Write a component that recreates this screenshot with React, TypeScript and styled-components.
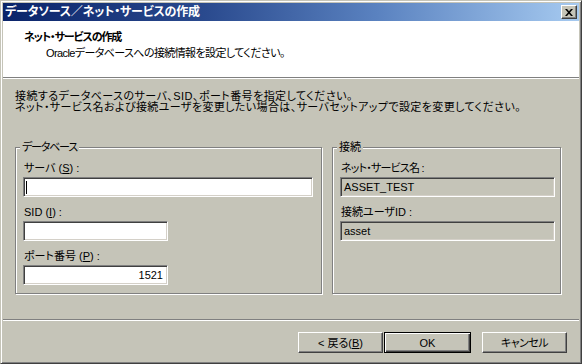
import React from "react";
import styled, { createGlobalStyle } from "styled-components";

const FACE = "#c5c4b8";

const GlobalStyle = createGlobalStyle`
  html, body {
    margin: 0;
    padding: 0;
    background: ${FACE};
  }
  body {
    font-family: "Liberation Sans", "Noto Sans CJK JP", sans-serif;
    font-size: 11px;
    font-feature-settings: "palt";
    color: #000;
  }
  * { box-sizing: border-box; }
`;

const Window = styled.div`
  width: 582px;
  height: 364px;
  display: flex;
  flex-direction: column;
  background: ${FACE};
  border: 1px solid;
  border-color: ${FACE} #404040 #404040 ${FACE};
  box-shadow: inset 1px 1px 0 #fff, inset -1px -1px 0 #808080;
  padding: 2px;
`;

const TitleBar = styled.div`
  height: 18px;
  flex: none;
  display: flex;
  align-items: center;
  justify-content: space-between;
  padding: 0 2px 0 2px;
  background: linear-gradient(to right, #0a246a 0%, #2a4a8e 35%, #5a82c0 65%, #a6caf0 100%);
`;

const TitleText = styled.span`
  color: #fff;
  font-weight: bold;
  font-size: 12px;
  line-height: 14px;
  letter-spacing: -0.2px;
`;

const CloseButton = styled.div`
  width: 16px;
  height: 14px;
  display: flex;
  align-items: center;
  justify-content: center;
  background: ${FACE};
  border: 1px solid;
  border-color: #fff #404040 #404040 #fff;
  box-shadow: inset -1px -1px 0 #808080;
`;

const Header = styled.div`
  height: 57px;
  flex: none;
  background: #fff;
  border-bottom: 1px solid #808080;
  padding: 9px 0 0 21px;
`;

const Heading = styled.div`
  font-weight: bold;
  line-height: 14px;
  letter-spacing: -1.1px;
`;

const SubTitle = styled.div`
  line-height: 14px;
  margin: 2px 0 0 22px;
  letter-spacing: -0.6px;
`;

const Body = styled.div`
  flex: 1;
  border-top: 1px solid #fff;
  border-bottom: 1px solid #808080;
  padding: 12px 0 0 12px;
  display: flex;
  flex-direction: column;
`;

const Instructions = styled.div`
  display: flex;
  flex-direction: column;
`;

const Line = styled.div<{ $ls: number }>`
  line-height: 11px;
  height: 11px;
  white-space: nowrap;
  letter-spacing: ${(p) => p.$ls}px;
`;

const Groups = styled.div`
  display: flex;
  gap: 10px;
  margin-top: 34px;
`;

const GroupBox = styled.div<{ $width: number }>`
  width: ${(p) => p.$width}px;
  height: 147px;
  border: 1px solid #808080;
  box-shadow: inset 1px 1px 0 #fff, 1px 1px 0 #fff;
  display: flex;
  flex-direction: column;
  align-items: flex-start;
  padding: 0 0 0 7px;
`;

const Legend = styled.span<{ $ls?: number }>`
  margin: -8px 0 0 -3px;
  padding: 0 2px;
  line-height: 14px;
  background: ${FACE};
  letter-spacing: ${(p) => p.$ls ?? 0}px;
`;

const Label = styled.div<{ $first?: boolean; $ls?: number }>`
  line-height: 14px;
  margin-top: ${(p) => (p.$first ? 7 : 8)}px;
  margin-bottom: 2px;
  margin-left: 1px;
  white-space: nowrap;
  letter-spacing: ${(p) => p.$ls ?? 0}px;
`;

const Field = styled.div<{ $width: number; $readOnly?: boolean; $align?: string }>`
  width: ${(p) => p.$width}px;
  height: 20px;
  flex: none;
  display: flex;
  align-items: center;
  justify-content: ${(p) => (p.$align === "right" ? "flex-end" : "flex-start")};
  background: ${(p) => (p.$readOnly ? FACE : "#fff")};
  border: 1px solid;
  border-color: #808080 #fff #fff #808080;
  box-shadow: inset 1px 1px 0 #404040, inset -1px -1px 0 #d4d0c8;
  padding: 0 4px 0 3px;
  line-height: 14px;
  white-space: nowrap;
`;

const Caret = styled.span`
  display: block;
  width: 1px;
  height: 13px;
  margin-left: -1px;
  background: #000;
`;

const Footer = styled.div`
  height: 41px;
  flex: none;
  border-top: 1px solid #fff;
  display: flex;
  align-items: flex-start;
  justify-content: flex-end;
  padding: 11px 12px 0 0;
`;

const Button = styled.div<{ $default?: boolean; $gapLeft?: number; $ls?: number }>`
  width: ${(p) => (p.$default ? 87 : 85)}px;
  height: 21px;
  margin-left: ${(p) => p.$gapLeft ?? 0}px;
  display: flex;
  align-items: center;
  justify-content: center;
  background: ${FACE};
  border: 1px solid;
  border-color: ${(p) => (p.$default ? "#000" : "#fff #404040 #404040 #fff")};
  box-shadow: ${(p) =>
    p.$default
      ? "inset 1px 1px 0 #fff, inset -1px -1px 0 #404040, inset -2px -2px 0 #808080"
      : "inset -1px -1px 0 #808080"};
  line-height: 14px;
  letter-spacing: ${(p) => p.$ls ?? 0}px;
`;

const Acc = styled.span`
  text-decoration: underline;
  text-underline-offset: 1px;
`;

export default function App() {
  return (
    <>
      <GlobalStyle />
      <Window>
        <TitleBar>
          <TitleText>データソース／ネット・サービスの作成</TitleText>
          <CloseButton>
            <svg width="8" height="7" viewBox="0 0 8 7">
              <path d="M0 0h2l2 2.2L6 0h2L5 3.5 8 7H6L4 4.8 2 7H0l3-3.5z" fill="#000" />
            </svg>
          </CloseButton>
        </TitleBar>
        <Header>
          <Heading>ネット・サービスの作成</Heading>
          <SubTitle>Oracleデータベースへの接続情報を設定してください。</SubTitle>
        </Header>
        <Body>
          <Instructions>
            <Line $ls={0.45}>接続するデータベースのサーバ、SID、ポート番号を指定してください。</Line>
            <Line $ls={0.4}>
              ネット・サービス名および接続ユーザを変更したい場合は、サーバセットアップで設定を変更してください。
            </Line>
          </Instructions>
          <Groups>
            <GroupBox $width={307}>
              <Legend $ls={-1.2}>データベース</Legend>
              <Label $first>
                サーバ (<Acc>S</Acc>) :
              </Label>
              <Field $width={290}>
                <Caret />
              </Field>
              <Label>
                SID (<Acc>I</Acc>) :
              </Label>
              <Field $width={145} />
              <Label>
                ポート番号 (<Acc>P</Acc>) :
              </Label>
              <Field $width={145} $align="right">
                1521
              </Field>
            </GroupBox>
            <GroupBox $width={229}>
              <Legend>接続</Legend>
              <Label $first $ls={-0.8}>
                ネット・サービス名 :
              </Label>
              <Field $width={215} $readOnly>
                ASSET_TEST
              </Field>
              <Label>接続ユーザID :</Label>
              <Field $width={215} $readOnly>
                asset
              </Field>
            </GroupBox>
          </Groups>
        </Body>
        <Footer>
          <Button>
            &lt; 戻る(<Acc>B</Acc>)
          </Button>
          <Button $default $gapLeft={1}>
            OK
          </Button>
          <Button $gapLeft={11} $ls={-0.5}>
            キャンセル
          </Button>
        </Footer>
      </Window>
    </>
  );
}
